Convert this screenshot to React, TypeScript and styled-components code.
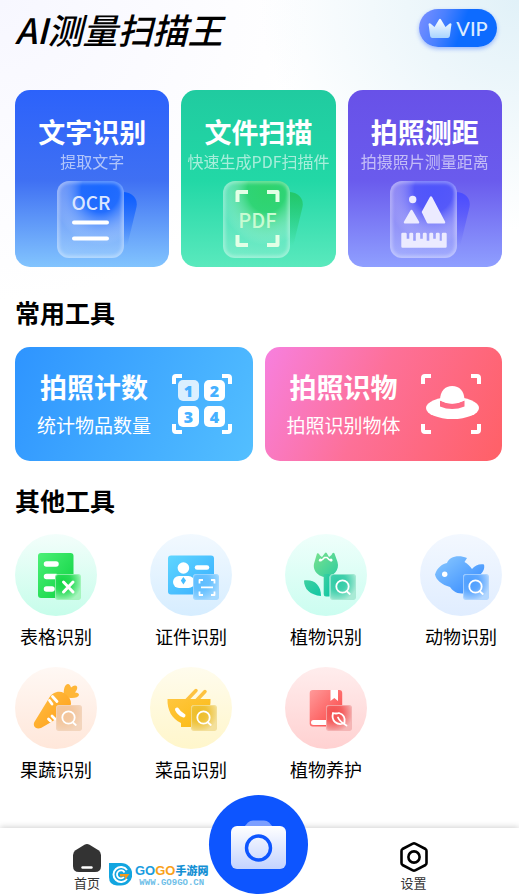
import React from "react";
import styled, { createGlobalStyle } from "styled-components";

const GlobalStyle = createGlobalStyle`
  * { box-sizing: border-box; }
  body {
    margin: 0;
    background: #fff;
    color: #000;
    font-family: "Noto Sans CJK SC", "Noto Sans", sans-serif;
  }
  button { font: inherit; border: 0; padding: 0; background: none; color: inherit; cursor: pointer; }
  h1, h2, p { margin: 0; }
  svg { display: block; }
`;

const Screen = styled.div`
  min-height: 100vh;
  display: flex;
  flex-direction: column;
  background:
    radial-gradient(ellipse 50% 230px at 100% 0, #e1f1f8 0, rgba(225, 241, 248, 0) 100%),
    radial-gradient(ellipse 60% 300px at 0 0, #f7f7ff 0, rgba(247, 247, 255, 0) 100%),
    #fff;
`;

const Main = styled.main`
  flex: 1;
  padding: 9px 17px 0 15px;
`;

const Header = styled.header`
  display: flex;
  align-items: flex-start;
  justify-content: space-between;
  padding-right: 5px;
`;

const AppTitle = styled.h1`
  font-size: 35px;
  line-height: 40px;
  font-weight: 500;
  font-style: italic;
`;

const VipButton = styled.button`
  display: flex;
  align-items: center;
  justify-content: center;
  gap: 4px;
  width: 78px;
  height: 38px;
  border-radius: 19px;
  color: #dcebff;
  font-family: Lato, "Noto Sans", sans-serif;
  font-size: 20px;
  line-height: 24px;
  font-weight: 500;
  background: linear-gradient(110deg, #7d90ff 0%, #4a80ff 30%, #0d6bff 55%, #0d6bff 100%);
  box-shadow: 0 2px 4px rgba(60, 110, 255, 0.45);
`;

const FeatureGrid = styled.div`
  display: grid;
  grid-template-columns: repeat(3, 1fr);
  gap: 12px;
  margin-top: 41px;
`;

const FeatureCard = styled.button<{ $bg: string }>`
  display: flex;
  flex-direction: column;
  align-items: center;
  padding: 27px 0 8px;
  border-radius: 15px;
  color: #fff;
  white-space: nowrap;
  background: ${(p) => p.$bg};
`;

const FeatureTitle = styled.span`
  font-size: 27px;
  line-height: 30px;
  font-weight: 700;
`;

const FeatureNote = styled.span`
  margin: 2px 0 8px;
  font-size: 16px;
  line-height: 24px;
  opacity: 0.6;
`;

const SectionTitle = styled.h2`
  font-size: 25px;
  line-height: 34px;
  font-weight: 700;
`;

const CommonSection = styled.section`
  display: grid;
  gap: 18px;
  margin-top: 28px;
`;

const OtherSection = styled.section`
  display: grid;
  gap: 17px;
  margin-top: 22px;
`;

const WideGrid = styled.div`
  display: grid;
  grid-template-columns: repeat(2, 1fr);
  gap: 12px;
`;

const WideCard = styled.button<{ $bg: string }>`
  display: flex;
  align-items: center;
  justify-content: space-between;
  padding: 22px 21px 22px 22px;
  border-radius: 15px;
  color: #fff;
  white-space: nowrap;
  background: ${(p) => p.$bg};
`;

const WideText = styled.span`
  display: flex;
  flex-direction: column;
  align-items: center;
  gap: 6px;
`;

const WideTitle = styled.span`
  font-size: 27px;
  line-height: 36px;
  font-weight: 700;
`;

const WideNote = styled.span`
  font-size: 19px;
  line-height: 28px;
`;

const ToolGrid = styled.div`
  display: grid;
  grid-template-columns: repeat(4, 82px);
  justify-content: space-between;
  row-gap: 18px;
`;

const Tool = styled.button`
  display: flex;
  flex-direction: column;
  align-items: center;
  gap: 7px;
  font-size: 18px;
  line-height: 26px;
  white-space: nowrap;
`;

const Disc = styled.span<{ $bg: string }>`
  width: 82px;
  height: 82px;
  border-radius: 50%;
  background: ${(p) => p.$bg};
`;

const Nav = styled.nav`
  position: relative;
  display: grid;
  grid-template-columns: 174fr 169fr 141fr;
  align-items: end;
  height: 67px;
  padding-right: 35px;
  background: #fff;
  box-shadow: 0 -1px 6px rgba(0, 0, 0, 0.18);
`;

const NavItem = styled.button`
  display: flex;
  flex-direction: column;
  align-items: center;
  padding-bottom: 2px;
  color: #333;
  font-size: 13px;
  line-height: 20px;
`;

const CameraButton = styled.button`
  justify-self: center;
  display: grid;
  place-items: center;
  width: 99px;
  height: 99px;
  margin: -33px 0 1px;
  border-radius: 50%;
  background: #0d55ff;
`;

const Watermark = styled.div`
  position: absolute;
  left: 109px;
  bottom: 8px;
  display: flex;
  align-items: center;
  gap: 3px;
  white-space: nowrap;
  pointer-events: none;
`;

const MarkText = styled.div`
  display: flex;
  flex-direction: column;
`;

const MarkName = styled.div`
  display: flex;
  align-items: center;
  font-size: 11px;
  line-height: 17px;
  font-weight: 900;
  color: #1590d4;
`;

const MarkWord = styled.b<{ $color: string }>`
  font-family: "Liberation Sans", sans-serif;
  font-size: 13px;
  color: ${(p) => p.$color};
`;

const MarkUrl = styled.div`
  font-family: "Liberation Mono", monospace;
  font-size: 9px;
  line-height: 8px;
  font-weight: 700;
  color: #6fc0e8;
  text-align: center;
`;

/* ---------- feature card drawings ---------- */

type GlassProps = { id: string; back: string; inner: string; children: React.ReactNode };

const Glass = ({ id, back, inner, children }: GlassProps) => (
  <svg width="90" height="78" viewBox="0 0 90 78" aria-hidden="true">
    <defs>
      <linearGradient id={`${id}-back`} x1="0" y1="0" x2="0" y2="1">
        <stop offset="0" stopColor={back} />
        <stop offset="0.85" stopColor={back} stopOpacity="0" />
      </linearGradient>
      <radialGradient id={`${id}-fill`} cx="0.65" cy="0.12" r="0.95">
        <stop offset="0" stopColor={inner} />
        <stop offset="0.3" stopColor={inner} stopOpacity="0.85" />
        <stop offset="0.75" stopColor="#fff" stopOpacity="0.16" />
        <stop offset="1" stopColor="#fff" stopOpacity="0.2" />
      </radialGradient>
      <filter id={`${id}-soft`} x="-10%" y="-10%" width="120%" height="120%">
        <feGaussianBlur stdDeviation="1.5" />
      </filter>
      <clipPath id={`${id}-clip`}>
        <rect x="10" y="0" width="67" height="77" rx="12" />
      </clipPath>
    </defs>
    <path d="M77 11C86 12 91 18 89.500 26L78 74H77Z" fill={`url(#${id}-back)`} />
    <rect x="10" y="0" width="67" height="77" rx="12" fill={`url(#${id}-fill)`} />
    <g clipPath={`url(#${id}-clip)`}>
      <rect x="10" y="0" width="67" height="77" rx="12" fill="none" stroke="#fff" strokeOpacity="0.3" strokeWidth="5" filter={`url(#${id}-soft)`} />
    </g>
    {children}
  </svg>
);

const OcrArt = () => (
  <Glass id="ocr" back="#0b5dff" inner="#1a68ff">
    <text x="44" y="29" textAnchor="middle" fontFamily="Noto Sans CJK SC, sans-serif" fontSize="19" fontWeight="500" fill="#dbe6ff">OCR</text>
    <path d="M27 41.500H60M27 57.500H60" stroke="#fff" strokeWidth="4" strokeLinecap="round" />
  </Glass>
);

const PdfArt = () => (
  <Glass id="pdf" back="#23c768" inner="#2fd36c">
    <text x="44.500" y="47" textAnchor="middle" fontFamily="Noto Sans CJK SC, sans-serif" fontSize="20" fontWeight="500" fill="#c8fbd2">PDF</text>
    <path d="M24.500 21V11H35M54 11H64.500V21M64.500 54V64H54M35 64H24.500V54" fill="none" stroke="#e3ffe6" strokeWidth="4" strokeLinejoin="round" />
  </Glass>
);

const MeasureArt = () => (
  <Glass id="measure" back="#4a4cff" inner="#4f55fb">
    <g fill="#ecebff" stroke="#ecebff" strokeLinejoin="round">
      <circle cx="32.700" cy="18.500" r="3.700" stroke="none" />
      <path d="M31.500 30L38 41.300H25Z" strokeWidth="2.500" />
      <path d="M51 16.500L64 41.300H48L43 31Z" strokeWidth="2.500" />
      <path
        d="M22.500 53H25.500V59H30.500V53H32V61H37V53H39V59H44V53H45.500V61H50.500V53H52V59H57V53H58.500V61H63V53H65.500V65.500H22.500Z"
        strokeWidth="2.400"
      />
    </g>
  </Glass>
);

/* ---------- wide card drawings ---------- */

const Corners = () => (
  <path
    d="M2 10V4Q2 2 4 2H10M50 2H56Q58 2 58 4V10M58 50V56Q58 58 56 58H50M10 58H4Q2 58 2 56V50"
    fill="none"
    stroke="#fff"
    strokeWidth="4"
  />
);

const CountArt = () => (
  <svg width="60" height="60" viewBox="0 0 60 60" aria-hidden="true">
    <Corners />
    {[
      [6, 6, "1"],
      [32, 6, "2"],
      [6, 32, "3"],
      [32, 32, "4"],
    ].map(([x, y, n]) => (
      <g key={n}>
        <rect x={x} y={y} width="21" height="21" rx="5" fill="#fff" fillOpacity={n === "1" ? 0.8 : 1} />
        <text x={Number(x) + 10.5} y={Number(y) + 17} textAnchor="middle" fontFamily="Noto Sans, sans-serif" fontSize="16" fontWeight="900" fill="#45b0ff">
          {n}
        </text>
      </g>
    ))}
  </svg>
);

const HatArt = () => (
  <svg width="60" height="60" viewBox="0 0 60 60" aria-hidden="true">
    <Corners />
    <ellipse cx="31.500" cy="34" rx="26.500" ry="11" fill="#fff" />
    <path d="M19 26.500Q31 33 43.500 26.500V32.500Q31 37.500 19 32.500Z" fill="#fe6b86" />
    <path d="M19 26.500C19 17 24 12 31.200 12S43.500 17 43.500 26.500Q31 32.500 19 26.500Z" fill="#fff" />
  </svg>
);

/* ---------- tool drawings ---------- */

const Grad = ({ id, from, to }: { id: string; from: string; to: string }) => (
  <linearGradient id={id} x1="0" y1="0" x2="1" y2="1">
    <stop offset="0" stopColor={from} />
    <stop offset="1" stopColor={to} />
  </linearGradient>
);

type BadgeProps = { id: string; x: number; y: number; deep: string; pale: string; children: React.ReactNode };

const Badge = ({ id, x, y, deep, pale, children }: BadgeProps) => (
  <g transform={`translate(${x} ${y})`}>
    <defs>
      <radialGradient id={`${id}-b`} cx="0.28" cy="0.3" r="0.78">
        <stop offset="0" stopColor={deep} />
        <stop offset="0.45" stopColor={deep} stopOpacity="0.85" />
        <stop offset="1" stopColor={pale} />
      </radialGradient>
    </defs>
    <rect width="26" height="26" rx="3" fill={pale} />
    <rect x="0.5" y="0.5" width="25" height="25" rx="3" fill={`url(#${id}-b)`} stroke={pale} strokeOpacity="0.45" />
    <g fill="none" stroke="#fff" strokeWidth="1.8" strokeLinecap="round" strokeLinejoin="round">
      {children}
    </g>
  </g>
);

const Lens = () => (
  <>
    <circle cx="12.500" cy="12.500" r="6.200" />
    <path d="M17 17.500L19.800 20" />
  </>
);

const Art = ({ children }: { children: React.ReactNode }) => (
  <svg width="82" height="82" viewBox="0 0 82 82" aria-hidden="true">
    {children}
  </svg>
);

const TableArt = () => (
  <Art>
    <defs><Grad id="tb" from="#4cf077" to="#0bd13f" /></defs>
    <rect x="23" y="19" width="35.500" height="45" rx="3" fill="url(#tb)" />
    <path d="M31.500 30H41M31.500 42.500H41M31.500 55H37" stroke="#fff" strokeWidth="5.500" strokeLinecap="round" />
    <Badge id="tb" x={40} y={40} deep="#14d745" pale="#a5f5bd">
      <path d="M8.500 8L18 18M18 8L8.500 18" strokeWidth="3" />
    </Badge>
  </Art>
);

const IdArt = () => (
  <Art>
    <defs><Grad id="idc" from="#5fd6ff" to="#37adff" /></defs>
    <rect x="18" y="21.500" width="46" height="39" rx="3" fill="url(#idc)" />
    <circle cx="33.400" cy="34" r="5.800" fill="#fff" />
    <rect x="23" y="42" width="21.500" height="12" rx="6" fill="#fff" />
    <path d="M33.400 43L36 46.500L33.400 50.500L30.800 46.500Z" fill="#45bdff" />
    <path d="M47 33.500H57" stroke="#fff" strokeWidth="4.500" strokeLinecap="round" />
    <Badge id="idc" x={43} y={40} deep="#5dbdff" pale="#a5d9ff">
      <path d="M6.500 9.500V6H10M18 6H21.500V9.500M21.500 17.500V21H18M10 21H6.500V17.500M8 13.300H20" strokeLinecap="butt" />
    </Badge>
  </Art>
);

const FlowerArt = () => (
  <Art>
    <defs>
      <Grad id="fl" from="#79e28d" to="#2fcca0" />
      <Grad id="st" from="#3fd0a0" to="#10c7a4" />
    </defs>
    <path d="M29.500 28L32 19.500Q33.500 18.500 35 21.500L37 23L40 19Q40.800 18 41.700 19L44 23L46.500 21Q48 17.500 49.500 19.500L52.500 28C55 36 48 43 40.700 43S26.500 36 29.500 28Z" fill="url(#fl)" />
    <path d="M34.500 26.500L37.500 25.500L39.500 23.500H42L44 25.500L46.500 26.500" fill="none" stroke="#fff" strokeWidth="1.600" strokeLinecap="round" />
    <circle cx="35.500" cy="26" r="1.500" fill="#fff" /><circle cx="46" cy="26" r="1.500" fill="#fff" />
    <path d="M38.700 40H44.500V62.500H41Q38.700 62.500 38.700 60Z" fill="url(#st)" />
    <path d="M19 46.500C29 45 36 51 36 62C25 61 19 55 19 46.500Z" fill="url(#st)" />
    <Badge id="fl" x={45} y={40} deep="#2fcba5" pale="#a9ead5"><Lens /></Badge>
  </Art>
);

const FishArt = () => (
  <Art>
    <defs><Grad id="fi" from="#8ccaff" to="#2f86ff" /></defs>
    <path d="M15 40.500C17 34 22 30 27 29C29 23 38 20 47 24L44.500 28C48 30 50 32 52 35C55 31 60 29.500 64 30.500C65 35 63 38 60 41V56H44L43 59.500C36 60 32 56 30 53C22 51 16 46 15 40.500Z" fill="url(#fi)" />
    <circle cx="24.700" cy="40.300" r="2.700" fill="#fff" />
    <Badge id="fi" x={43} y={40} deep="#4d9eff" pale="#b3d7ff"><Lens /></Badge>
  </Art>
);

const CarrotArt = () => (
  <Art>
    <defs><Grad id="ca" from="#ffc148" to="#ff9c14" /></defs>
    <path d="M49 29C48 22 50 17 53 17Q55 17 56 20.500Q60 17 62 19.500Q63 22 60 25.500Q64 25.500 64 28Q63 31.500 55 31Z" fill="#ffb637" />
    <path d="M33.500 32C37 25 44 23.500 49 26Q56 30 56 37C54 45 40 53 26 61C20 63 17 58 20 54Z" fill="url(#ca)" />
    <path d="M34.500 33.500L37 37M37.500 29.500L42 34.500M33.500 52L35.500 54M37 49L40 52" stroke="#fff" strokeWidth="2.800" strokeLinecap="round" />
    <Badge id="ca" x={41} y={38} deep="#f3c59a" pale="#f3d5bd"><Lens /></Badge>
  </Art>
);

const BowlArt = () => (
  <Art>
    <defs><Grad id="bo" from="#ffc63f" to="#fbba10" /></defs>
    <path d="M36 34L46 23.500M46 34L55 24.500" stroke="#fdc240" strokeWidth="3.500" strokeLinecap="round" />
    <path d="M17.500 32H60.500C61 42 57 51 49 55V60H31V56C22 52 17 43 17.500 32Z" fill="url(#bo)" />
    <path d="M27 42.500Q29 46.500 33.500 48.500" fill="none" stroke="#fff" strokeWidth="4" strokeLinecap="round" />
    <Badge id="bo" x={41} y={38} deep="#eebd27" pale="#f3e09c"><Lens /></Badge>
  </Art>
);

const BookArt = () => (
  <Art>
    <defs><Grad id="bk" from="#ff9a9a" to="#fb4040" /></defs>
    <rect x="24.700" y="23" width="32.500" height="36.500" rx="3" fill="url(#bk)" />
    <path d="M45.500 23H53V34L49.300 31L45.500 34Z" fill="#fff" />
    <path d="M28.500 55.500H50" stroke="#fff" strokeWidth="5" strokeLinecap="round" />
    <Badge id="bk" x={41} y={38} deep="#f45050" pale="#f5b5b5">
      <path d="M7 8Q10 9 13 8Q20 10 18.500 18Q13 20.500 9 17Q5.500 14 7 8ZM12 12.500Q14 17 20.500 20.500" />
    </Badge>
  </Art>
);

/* ---------- bar drawings ---------- */

const CrownIcon = () => (
  <svg width="24" height="21" viewBox="0 0 24 21" aria-hidden="true">
    <defs>
      <linearGradient id="crown" x1="0" y1="0" x2="0" y2="1">
        <stop offset="0" stopColor="#fff" />
        <stop offset="1" stopColor="#a9d4ff" />
      </linearGradient>
    </defs>
    <path d="M0.500 6Q1.500 4.500 3 6L6.500 9L11 1.500Q12 0 13 1.500L17.500 9L21 6Q22.500 4.500 23.500 6L22 17Q21.800 20 19.500 20H4.500Q2.200 20 2 17Z" fill="url(#crown)" />
  </svg>
);

const HomeIcon = () => (
  <svg width="28" height="29" viewBox="0 0 28 29" aria-hidden="true">
    <path d="M11.500 0.800Q14 -0.600 16.500 0.800L25.500 6.300Q28 8 28 11V22Q28 28 22 28H6Q0 28 0 22V11Q0 8 2.500 6.300Z" fill="#333" />
    <path d="M9.500 23.500H18.500" stroke="#fff" strokeWidth="2.400" strokeLinecap="round" />
  </svg>
);

const SettingsIcon = () => (
  <svg width="28" height="31" viewBox="0 0 28 31" aria-hidden="true" fill="none" stroke="#000" strokeWidth="2.600">
    <path d="M12.800 1.700Q14 1.100 15.200 1.700L25.500 7Q26.500 7.600 26.500 9V21Q26.500 22.400 25.500 23L15.200 28.300Q14 28.900 12.800 28.300L2.500 23Q1.500 22.400 1.500 21V9Q1.500 7.600 2.500 7Z" />
    <circle cx="14" cy="15" r="5.600" />
  </svg>
);

const CameraIcon = () => (
  <svg width="55" height="49" viewBox="0 0 55 49" aria-hidden="true">
    <defs>
      <linearGradient id="cam" x1="0" y1="0" x2="0" y2="1">
        <stop offset="0" stopColor="#fff" />
        <stop offset="1" stopColor="#c3d3ff" />
      </linearGradient>
    </defs>
    <path d="M13 7L17 2.500Q19 0.500 22 0.500H33Q36 0.500 38 2.500L42 7Z" fill="#7c9fff" />
    <rect y="6" width="55" height="43" rx="6" fill="url(#cam)" />
    <circle cx="27.500" cy="28" r="12" fill="none" stroke="#0d55ff" strokeWidth="3.400" />
  </svg>
);

const MarkLogo = () => (
  <svg width="23" height="23" viewBox="0 0 23 23" aria-hidden="true">
    <path d="M0 0H12A11 11 0 0 1 12 22.500H8Q0 22 0 14Z" fill="#12a5e0" />
    <path d="M18 7A7.500 7.500 0 1 0 18 16" fill="none" stroke="#fff" strokeWidth="2" />
    <path d="M15.500 9.500A4 4 0 1 0 15 14" fill="none" stroke="#fff" strokeWidth="1.800" />
    <path d="M11 11H20.500L16 17V13.500H11Z" fill="#f49a1c" />
  </svg>
);

const features = [
  { title: "文字识别", note: "提取文字", bg: "linear-gradient(180deg, #2c62fb 0%, #3f70f3 51%, #82c4fe 100%)", Icon: OcrArt },
  { title: "文件扫描", note: "快速生成PDF扫描件", bg: "linear-gradient(180deg, #20cba0 0%, #22d8a6 51%, #5ae9bd 100%)", Icon: PdfArt },
  { title: "拍照测距", note: "拍摄照片测量距离", bg: "linear-gradient(180deg, #6851e8 0%, #6a5bed 51%, #8f9fff 100%)", Icon: MeasureArt },
];

const common = [
  { title: "拍照计数", note: "统计物品数量", bg: "linear-gradient(115deg, #2e94ff 0%, #53bfff 100%)", Icon: CountArt },
  { title: "拍照识物", note: "拍照识别物体", bg: "linear-gradient(115deg, #f780df 0%, #fd7098 45%, #ff6066 100%)", Icon: HatArt },
];

const tools = [
  { name: "表格识别", bg: "linear-gradient(#f3fefb, #c6fdea)", Icon: TableArt },
  { name: "证件识别", bg: "linear-gradient(#f2f9ff, #d6edff)", Icon: IdArt },
  { name: "植物识别", bg: "linear-gradient(#effffb, #cbfdf0)", Icon: FlowerArt },
  { name: "动物识别", bg: "linear-gradient(#f3f8ff, #e0edff)", Icon: FishArt },
  { name: "果蔬识别", bg: "linear-gradient(#fff8f4, #ffe7da)", Icon: CarrotArt },
  { name: "菜品识别", bg: "linear-gradient(#fffced, #fff6cb)", Icon: BowlArt },
  { name: "植物养护", bg: "linear-gradient(#ffeded, #ffd1d1)", Icon: BookArt },
];

export default function App() {
  return (
    <>
      <GlobalStyle />
      <Screen>
        <Main>
          <Header>
            <AppTitle>AI测量扫描王</AppTitle>
            <VipButton type="button">
              <CrownIcon />
              VIP
            </VipButton>
          </Header>

          <FeatureGrid>
            {features.map(({ title, note, bg, Icon }) => (
              <FeatureCard key={title} type="button" $bg={bg}>
                <FeatureTitle>{title}</FeatureTitle>
                <FeatureNote>{note}</FeatureNote>
                <Icon />
              </FeatureCard>
            ))}
          </FeatureGrid>

          <CommonSection>
            <SectionTitle>常用工具</SectionTitle>
            <WideGrid>
              {common.map(({ title, note, bg, Icon }) => (
                <WideCard key={title} type="button" $bg={bg}>
                  <WideText>
                    <WideTitle>{title}</WideTitle>
                    <WideNote>{note}</WideNote>
                  </WideText>
                  <Icon />
                </WideCard>
              ))}
            </WideGrid>
          </CommonSection>

          <OtherSection>
            <SectionTitle>其他工具</SectionTitle>
            <ToolGrid>
              {tools.map(({ name, bg, Icon }) => (
                <Tool key={name} type="button">
                  <Disc $bg={bg}>
                    <Icon />
                  </Disc>
                  {name}
                </Tool>
              ))}
            </ToolGrid>
          </OtherSection>
        </Main>

        <Nav>
          <NavItem type="button">
            <HomeIcon />
            首页
          </NavItem>
          <CameraButton type="button" aria-label="拍照">
            <CameraIcon />
          </CameraButton>
          <NavItem type="button">
            <SettingsIcon />
            设置
          </NavItem>
          <Watermark>
            <MarkLogo />
            <MarkText>
              <MarkName>
                <MarkWord $color="#1a9de0">GO</MarkWord>
                <MarkWord $color="#f9a11b">GO</MarkWord>
                手游网
              </MarkName>
              <MarkUrl>WWW.GO9GO.CN</MarkUrl>
            </MarkText>
          </Watermark>
        </Nav>
      </Screen>
    </>
  );
}
